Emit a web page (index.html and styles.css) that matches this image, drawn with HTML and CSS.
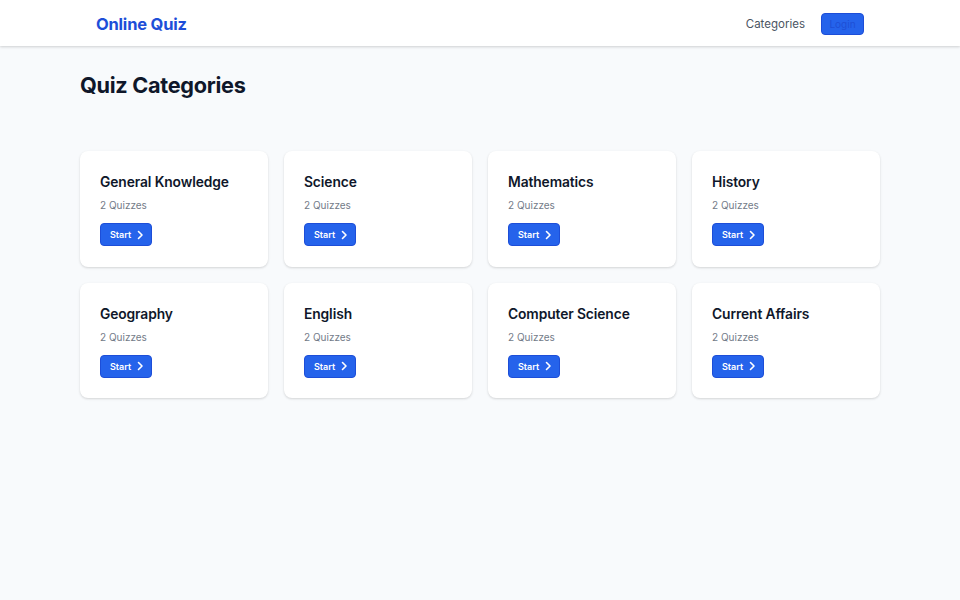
FILE: index.html
```html
<!DOCTYPE html>
<html lang="en">
<head>
<meta charset="utf-8">
<title>Online Quiz</title>
<link rel="stylesheet" href="styles.css">
</head>
<body>
<header class="topbar">
  <a class="logo" href="#">Online Quiz</a>
  <nav class="nav">
    <a class="nav-link" href="#">Categories</a>
    <button class="login">Login</button>
  </nav>
</header>
<main class="main">
  <h1 class="page-title">Quiz Categories</h1>
  <div class="grid">
    <div class="card"><h2 class="card-title">General Knowledge</h2><p class="card-sub">2 Quizzes</p><button class="start">Start <svg class="chev" viewBox="0 0 10 10"><path d="M3.5 1.5 L7 5 L3.5 8.5"/></svg></button></div>
    <div class="card"><h2 class="card-title">Science</h2><p class="card-sub">2 Quizzes</p><button class="start">Start <svg class="chev" viewBox="0 0 10 10"><path d="M3.5 1.5 L7 5 L3.5 8.5"/></svg></button></div>
    <div class="card"><h2 class="card-title">Mathematics</h2><p class="card-sub">2 Quizzes</p><button class="start">Start <svg class="chev" viewBox="0 0 10 10"><path d="M3.5 1.5 L7 5 L3.5 8.5"/></svg></button></div>
    <div class="card"><h2 class="card-title">History</h2><p class="card-sub">2 Quizzes</p><button class="start">Start <svg class="chev" viewBox="0 0 10 10"><path d="M3.5 1.5 L7 5 L3.5 8.5"/></svg></button></div>
    <div class="card"><h2 class="card-title">Geography</h2><p class="card-sub">2 Quizzes</p><button class="start">Start <svg class="chev" viewBox="0 0 10 10"><path d="M3.5 1.5 L7 5 L3.5 8.5"/></svg></button></div>
    <div class="card"><h2 class="card-title">English</h2><p class="card-sub">2 Quizzes</p><button class="start">Start <svg class="chev" viewBox="0 0 10 10"><path d="M3.5 1.5 L7 5 L3.5 8.5"/></svg></button></div>
    <div class="card"><h2 class="card-title">Computer Science</h2><p class="card-sub">2 Quizzes</p><button class="start">Start <svg class="chev" viewBox="0 0 10 10"><path d="M3.5 1.5 L7 5 L3.5 8.5"/></svg></button></div>
    <div class="card"><h2 class="card-title">Current Affairs</h2><p class="card-sub">2 Quizzes</p><button class="start">Start <svg class="chev" viewBox="0 0 10 10"><path d="M3.5 1.5 L7 5 L3.5 8.5"/></svg></button></div>
  </div>
</main>
</body>
</html>
```
FILE: styles.css
```css
* { box-sizing: border-box; }
html, body { margin: 0; padding: 0; }
body {
  background: #f8fafc;
  font-family: Inter, "Noto Sans", sans-serif;
  color: #0f172a;
  min-height: 600px;
}
.topbar {
  height: 46px;
  background: #ffffff;
  box-shadow: 0 1px 3px rgba(0,0,0,0.12), 0 1px 2px rgba(0,0,0,0.06);
  display: flex;
  align-items: center;
  justify-content: space-between;
  padding: 1px 96px 0 96px;
}
.logo {
  color: #1d4ed8;
  font-weight: 700;
  font-size: 16.5px;
  text-decoration: none;
  letter-spacing: -0.2px;
}
.nav { display: flex; align-items: center; gap: 16px; }
.nav-link {
  color: #4b5563;
  font-size: 11.5px;
  text-decoration: none;
}
.login {
  background: #2563eb;
  color: #1e4fd6;
  border: 1px solid #1d4ed8;
  border-radius: 4px;
  height: 22px;
  width: 43px;
  font-family: inherit;
  font-size: 10px;
  padding: 0;
}
.main {
  width: 800px;
  margin: 0 auto;
  padding-top: 25px;
}
.page-title {
  margin: 0 0 52px 0;
  font-size: 21.7px;
  line-height: 28px;
  font-weight: 700;
  letter-spacing: -0.3px;
  color: #0f172a;
}
.grid {
  display: grid;
  grid-template-columns: repeat(4, 1fr);
  gap: 16px;
}
.card {
  background: #ffffff;
  border-radius: 8px;
  box-shadow: 0 1px 3px rgba(0,0,0,0.1), 0 1px 2px rgba(0,0,0,0.06);
  padding: 20px 20px 20px 20px;
  height: 115.5px;
}
.card-title {
  margin: 0;
  font-size: 13.8px;
  line-height: 22px;
  font-weight: 600;
  color: #0f172a;
  letter-spacing: -0.1px;
}
.card-sub {
  margin: 5px 0 10px 0;
  font-size: 10px;
  line-height: 14px;
  color: #737b88;
}
.start {
  display: inline-flex;
  align-items: center;
  gap: 4px;
  background: #2563eb;
  color: #ffffff;
  border: 1px solid #1d4ed8;
  border-radius: 4px;
  height: 23px;
  width: 52px;
  padding: 0 0 0 9px;
  font-family: inherit;
  font-size: 9px;
  font-weight: 600;
}
.chev {
  width: 10px;
  height: 10px;
  fill: none;
  stroke: #ffffff;
  stroke-width: 1.6;
  stroke-linecap: round;
  stroke-linejoin: round;
}
```
